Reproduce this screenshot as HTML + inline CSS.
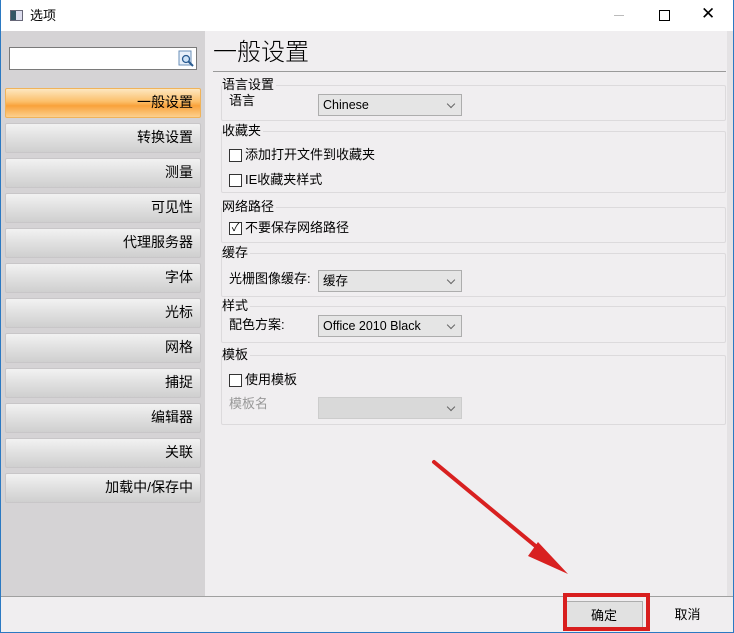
<!DOCTYPE html>
<html><head><meta charset="utf-8"><style>
*{margin:0;padding:0;box-sizing:border-box}
body{width:734px;height:633px;overflow:hidden;position:relative;background:#f0eef0;font-family:"Liberation Sans","Noto Sans CJK SC",sans-serif;font-size:13px;line-height:15px;color:#000}
.a{position:absolute}
.win{left:0;top:0;width:734px;height:633px;border:1px solid #2b79c2;border-top:none}
.title{left:0;top:0;width:733px;height:31px;background:#fff}
.left{left:1px;top:31px;width:204px;height:565px;background:#d5d3d5}
.nav{left:5px;width:196px;height:30px;border:1px solid #c8c6c8;border-radius:2px;background:linear-gradient(#f2f2f2,#e0e0e0 50%,#cfcfcf);text-align:right;padding-right:7px;line-height:26px;font-size:14px}
.nav.sel{background:linear-gradient(#fde7c0,#fcbf6a 45%,#f9a23b 60%,#fcd08e);border-color:#f0b35a}
.grp{left:221px;width:505px;border:1px solid #dcdadc;border-radius:2px}
.gl{left:222px;font-size:13px;background:#f0eef0;padding-right:2px;line-height:15px}
.cb{width:13px;height:13px;border:1px solid #333;background:#fff}
.sel2{left:318px;width:144px;height:22px;border:1px solid #adadad;background:#e5e5e5;padding-left:4px;line-height:20px;font-size:12.5px}
.sel2:after{content:"";position:absolute;right:7px;top:6px;width:5px;height:5px;border-right:1px solid #666;border-bottom:1px solid #666;transform:rotate(45deg)}
.bottom{left:1px;top:596px;width:732px;height:37px;background:#f0eef0;border-top:1px solid #a0a0a0}
</style></head><body>
<div class="a title"></div>
<div class="a" style="left:10px;top:10px;width:13px;height:11px;border:1px solid #667;background:linear-gradient(90deg,#356 0 5px,#dde 5px)"></div>
<div class="a" style="left:30px;top:8px;font-size:13px">选项</div>
<div class="a" style="left:614px;top:15px;width:10px;height:1px;background:#bbb"></div>
<div class="a" style="left:659px;top:10px;width:11px;height:11px;border:1px solid #000"></div>
<div class="a" style="left:701px;top:4px;font-size:17px;line-height:20px">✕</div>
<div class="a left"></div>
<div class="a" style="left:9px;top:47px;width:188px;height:23px;background:#fff;border:1px solid #7a7a7a"></div>
<svg class="a" style="left:178px;top:50px" width="17" height="17"><rect x="1" y="1" width="12" height="14" fill="#e8f0fa" stroke="#6a8fb8"/><circle cx="8" cy="9" r="3.5" fill="#cfe3f7" stroke="#2a5b90" stroke-width="1.3"/><line x1="10.5" y1="11.5" x2="15" y2="16" stroke="#2a5b90" stroke-width="2"/></svg>
<div class="a nav sel" style="top:88px">一般设置</div>
<div class="a nav" style="top:123px">转换设置</div>
<div class="a nav" style="top:158px">测量</div>
<div class="a nav" style="top:193px">可见性</div>
<div class="a nav" style="top:228px">代理服务器</div>
<div class="a nav" style="top:263px">字体</div>
<div class="a nav" style="top:298px">光标</div>
<div class="a nav" style="top:333px">网格</div>
<div class="a nav" style="top:368px">捕捉</div>
<div class="a nav" style="top:403px">编辑器</div>
<div class="a nav" style="top:438px">关联</div>
<div class="a nav" style="top:473px">加载中/保存中</div>

<div class="a" style="left:213px;top:39px;font-size:24px;line-height:28px;font-weight:300">一般设置</div>
<div class="a" style="left:213px;top:71px;width:513px;height:1px;background:#9a9a9a"></div>

<div class="a grp" style="top:85px;height:36px"></div><div class="a gl" style="top:77px">语言设置</div>
<div class="a" style="left:229px;top:93px">语言</div>
<div class="a sel2" style="top:94px">Chinese</div>

<div class="a grp" style="top:131px;height:62px"></div><div class="a gl" style="top:123px">收藏夹</div>
<div class="a cb" style="left:229px;top:149px"></div><div class="a" style="left:245px;top:147px">添加打开文件到收藏夹</div>
<div class="a cb" style="left:229px;top:174px"></div><div class="a" style="left:245px;top:172px">IE收藏夹样式</div>

<div class="a grp" style="top:207px;height:36px"></div><div class="a gl" style="top:199px">网络路径</div>
<div class="a cb" style="left:229px;top:222px;font-size:11px;line-height:11px;text-align:center">✓</div><div class="a" style="left:245px;top:220px">不要保存网络路径</div>

<div class="a grp" style="top:253px;height:44px"></div><div class="a gl" style="top:245px">缓存</div>
<div class="a" style="left:229px;top:271px">光栅图像缓存:</div>
<div class="a sel2" style="top:270px">缓存</div>

<div class="a grp" style="top:306px;height:37px"></div><div class="a gl" style="top:298px">样式</div>
<div class="a" style="left:229px;top:317px">配色方案:</div>
<div class="a sel2" style="top:315px">Office 2010 Black</div>

<div class="a grp" style="top:355px;height:70px"></div><div class="a gl" style="top:347px">模板</div>
<div class="a cb" style="left:229px;top:374px"></div><div class="a" style="left:245px;top:372px">使用模板</div>
<div class="a" style="left:229px;top:396px;color:#999">模板名</div>
<div class="a sel2" style="top:397px;background:#d9d9d9;border-color:#ccc"></div>

<div class="a bottom"></div>
<div class="a" style="left:565px;top:601px;width:78px;height:30px;background:#e1e1e1;border:1px solid #adadad;text-align:center;line-height:28px">确定</div>
<div class="a" style="left:563px;top:593px;width:87px;height:38px;border:4px solid #d81e1e"></div>
<div class="a" style="left:655px;top:601px;width:65px;height:30px;text-align:center;line-height:28px">取消</div>
<svg class="a" style="left:420px;top:450px" width="160" height="130"><line x1="14" y1="12" x2="130" y2="108" stroke="#d82020" stroke-width="4" stroke-linecap="round"/><polygon points="148,124 118,92 108,106" fill="#d82020"/></svg>
<div class="a" style="left:727px;top:31px;width:6px;height:565px;background:#e4e2e4"></div>
<div class="a win"></div>
</body></html>
